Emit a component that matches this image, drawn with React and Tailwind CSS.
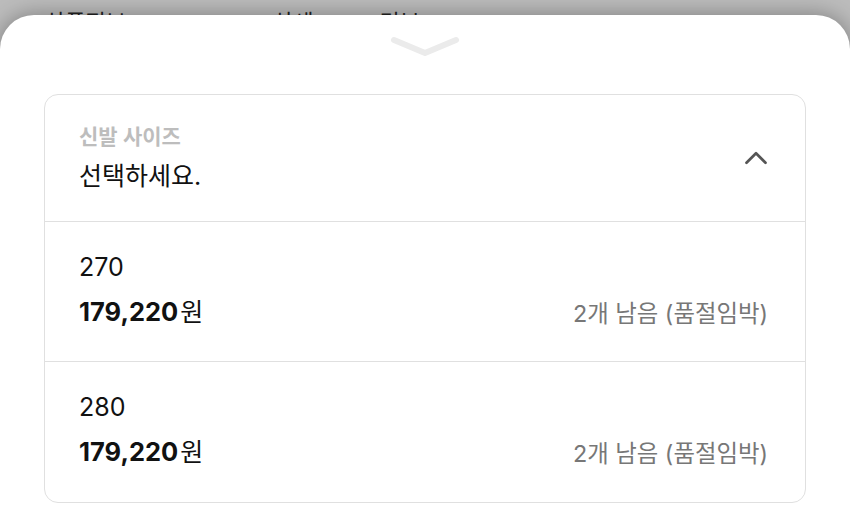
import { ChevronUp } from 'lucide-react';

// Bottom sheet with shoe size option list.
const sizes = [
  { size: '270', price: '179,220', stock: '2개 남음 (품절임박)' },
  { size: '280', price: '179,220', stock: '2개 남음 (품절임박)' },
];

const font = { fontFamily: 'Inter, "Noto Sans CJK KR", sans-serif' };

const App = () => {
  return (
    <div className="w-[850px] h-[519px] overflow-hidden bg-[#bcbcbc] flex flex-col" style={font}>
      {/* page behind the sheet */}
      <div className="h-[15px] overflow-hidden flex text-[22px] text-[#222] leading-none pt-[11px]">
        <span className="ml-[45px]">상품정보</span>
        <span className="ml-[147px]">상세</span>
        <span className="ml-[66px]">리뷰</span>
      </div>

      {/* sheet */}
      <div className="flex-1 bg-white rounded-t-[34px] shadow-[0_0_22px_rgba(0,0,0,0.35)] flex flex-col items-center">
        <svg width="70" height="24" viewBox="0 0 70 24" className="mt-[20px]">
          <path d="M4 5 L35 18 L66 5" fill="none" stroke="#ebebeb" strokeWidth="6" strokeLinecap="round" strokeLinejoin="round" />
        </svg>

        <div className="mt-[35px] w-[762px] border border-[#e0e0e0] rounded-[14px] flex flex-col">
          <div className="h-[127px] flex items-center justify-between pl-[34px] pr-[32px] border-b border-[#e0e0e0]">
            <div className="flex flex-col">
              <span className="text-[21px] font-semibold text-[#bdbdbd] leading-[28px]">신발 사이즈</span>
              <span className="text-[25px] text-[#111] leading-[34px] mt-[8px]">선택하세요.</span>
            </div>
            <ChevronUp size={38} strokeWidth={1.7} className="text-[#555] mr-[-2px]" />
          </div>

          {sizes.map((s, i) => (
            <div
              key={s.size}
              className={`h-[140px] flex flex-col justify-center pl-[34px] pr-[37px] ${i < sizes.length - 1 ? 'border-b border-[#e0e0e0]' : ''}`}
            >
              <span className="text-[25px] text-[#111] leading-[30px]">{s.size}</span>
              <div className="flex items-center justify-between mt-[14px]">
                <span className="text-[#111] leading-[32px]">
                  <span className="text-[25.5px] font-bold">{s.price}</span>
                  <span className="text-[25px] ml-[2px]">원</span>
                </span>
                <span className="text-[23.4px] text-[#777]">{s.stock}</span>
              </div>
            </div>
          ))}
        </div>
      </div>
    </div>
  );
};

export default App;
